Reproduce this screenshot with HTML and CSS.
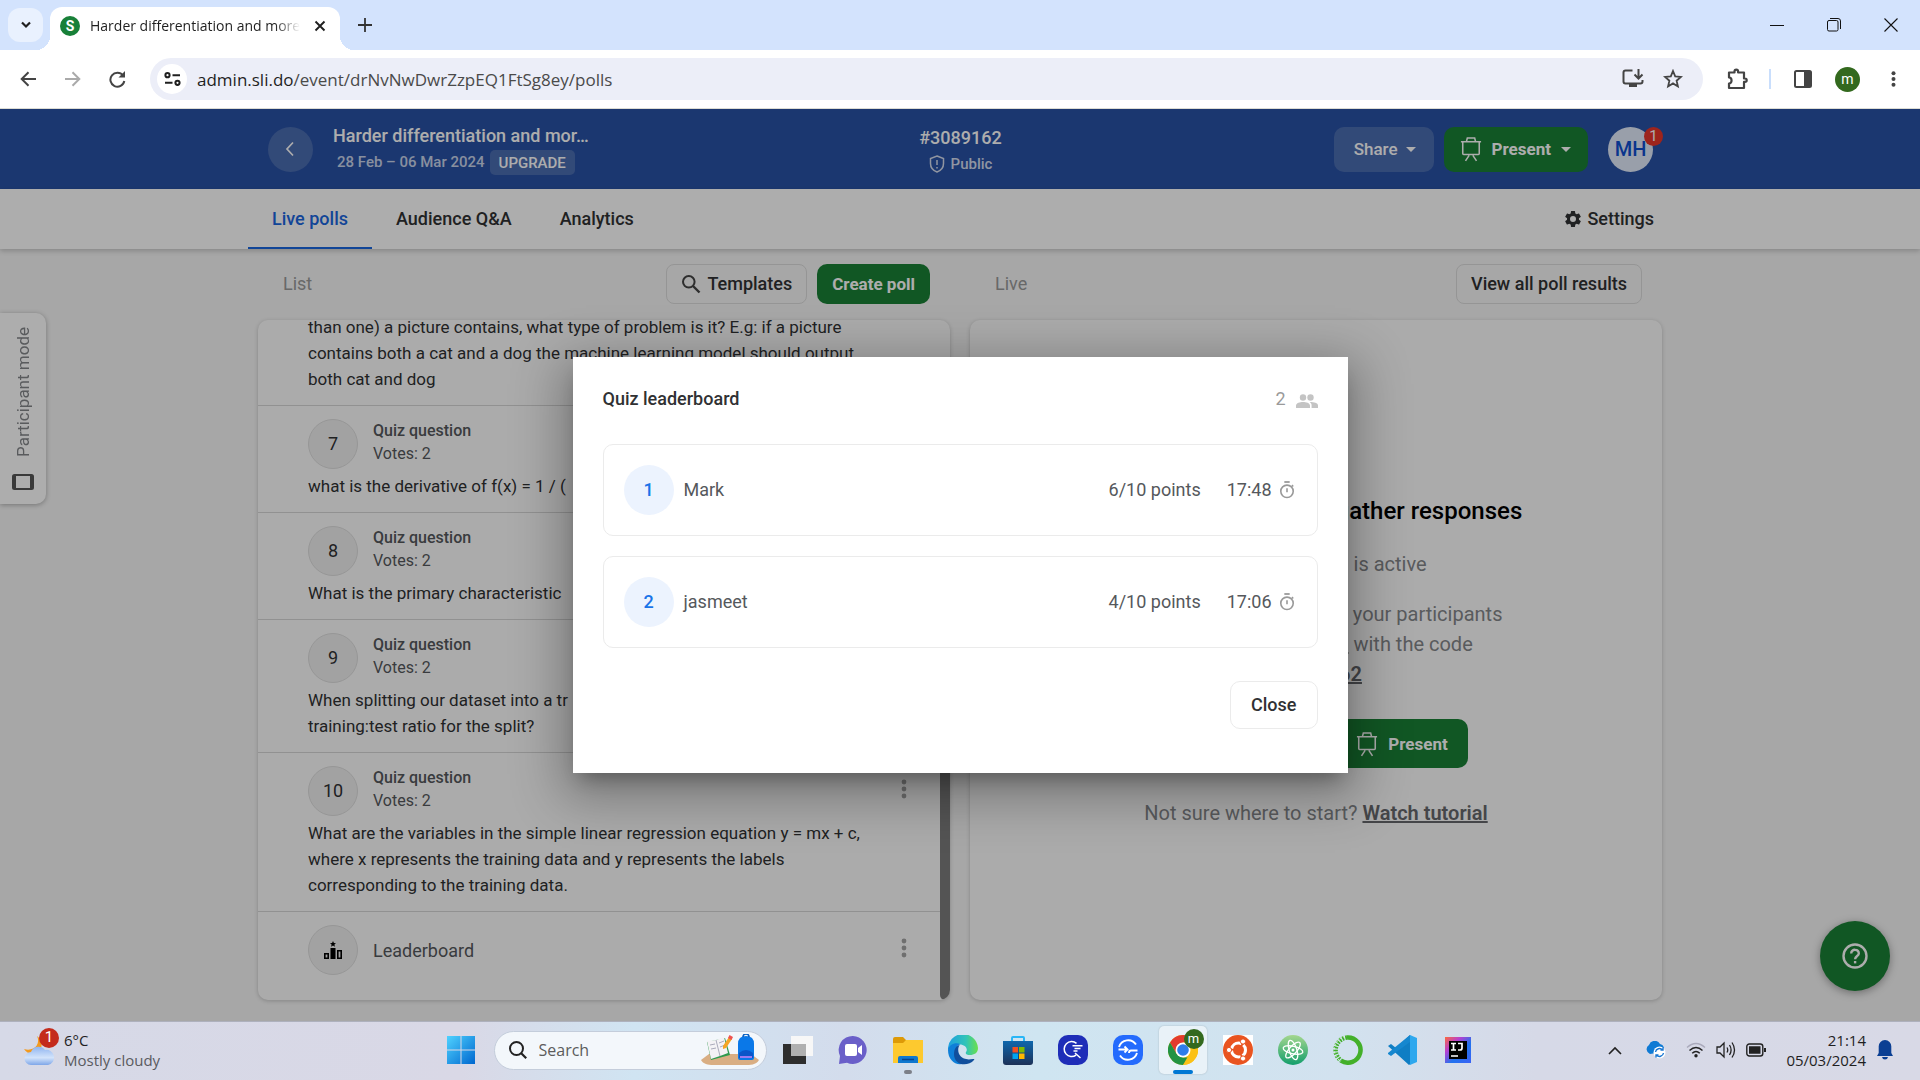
FILE: index.html
```html
<!DOCTYPE html>
<html lang="en">
<head>
<meta charset="utf-8">
<title>Harder differentiation and more</title>
<link rel="stylesheet" href="styles.css">
</head>
<body>
<svg width="0" height="0" class="defs" aria-hidden="true">
  <symbol id="i-board" viewBox="0 0 24 28"><g fill="none" stroke="currentColor" stroke-width="1.700"><path d="M1 6h22M3 6v13q0 1 1 1h16q1 0 1-1V6M7 6l1-4h8l1 4M10 21l-4 6M14 21l4 6"/></g></symbol>
  <symbol id="i-dots" viewBox="0 0 6 20"><circle cx="3" cy="3" r="2.4"/><circle cx="3" cy="10" r="2.4"/><circle cx="3" cy="17" r="2.4"/></symbol>
  <symbol id="i-watch" viewBox="0 0 18 20"><path d="M6 1h6" stroke="currentColor" stroke-width="2"/><circle cx="9" cy="11.500" r="7" fill="none" stroke="currentColor" stroke-width="1.800"/><path d="M9 8v4.500M14.500 4.500l1.500 1.500" stroke="currentColor" stroke-width="1.800"/></symbol>
</svg>

<header class="tabstrip">
  <button class="tab-search" aria-label="Search tabs"><svg width="12" height="8" viewBox="0 0 12 8"><path d="M2 1.500l4 4 4-4" fill="none" stroke="#1f1f1f" stroke-width="2.200"/></svg></button>
  <div class="tab">
    <span class="favicon">S</span>
    <span class="tab-title">Harder differentiation and more</span>
    <button class="icon-btn tab-close" aria-label="Close tab"><svg width="12" height="12" viewBox="0 0 12 12"><path d="M1.500 1.500l9 9M10.500 1.500l-9 9" stroke="#1f1f1f" stroke-width="1.900"/></svg></button>
  </div>
  <button class="icon-btn new-tab" aria-label="New tab"><svg width="14" height="14" viewBox="0 0 14 14"><path d="M7 0v14M0 7h14" stroke="#333" stroke-width="1.800"/></svg></button>
  <div class="win-controls">
    <button class="icon-btn" aria-label="Minimise"><svg width="14" height="14" viewBox="0 0 14 14"><path d="M0 7.500h14" stroke="#111" stroke-width="1"/></svg></button>
    <button class="icon-btn" aria-label="Restore"><svg width="14" height="14" viewBox="0 0 14 14"><g fill="none" stroke="#111"><rect x=".5" y="2.500" width="10.500" height="10.500" rx="1.500"/><path d="M3 .5h8q2.500 0 2.500 2.500v8"/></g></svg></button>
    <button class="icon-btn" aria-label="Close"><svg width="14" height="14" viewBox="0 0 14 14"><path d="M.5.5l13 13M13.500.5l-13 13" stroke="#111" stroke-width="1.100"/></svg></button>
  </div>
</header>

<nav class="toolbar">
  <button class="icon-btn nav-btn" aria-label="Back"><svg width="16" height="16" viewBox="0 0 16 16"><path d="M16 8H2M8.500 1.200L1.700 8l6.800 6.800" fill="none" stroke="#444" stroke-width="2"/></svg></button>
  <button class="icon-btn nav-btn" aria-label="Forward"><svg width="16" height="16" viewBox="0 0 16 16"><path d="M0 8h14M7.500 1.200L14.300 8l-6.800 6.800" fill="none" stroke="#aaa" stroke-width="2"/></svg></button>
  <button class="icon-btn nav-btn" aria-label="Reload"><svg width="17" height="17" viewBox="0 0 17 17"><path d="M14 4.500A7 7 0 1 0 15.300 10" fill="none" stroke="#444" stroke-width="2"/><path d="M16 0v6.500H9.500z" fill="#444"/></svg></button>
  <div class="omnibox">
    <span class="site-info"><svg width="17" height="14" viewBox="0 0 17 14"><g fill="none" stroke="#1f1f1f" stroke-width="2"><circle cx="3.500" cy="3.200" r="2.100"/><path d="M8.500 3.200H16M1 10.800h7.500"/><circle cx="13.500" cy="10.800" r="2.100"/></g></svg></span>
    <span class="url">admin.sli.do<span class="path">/event/drNvNwDwrZzpEQ1FtSg8ey/polls</span></span>
    <button class="icon-btn" aria-label="Install"><svg width="22" height="20" viewBox="0 0 22 20"><g fill="none" stroke="#444" stroke-width="2"><path d="M10.500 1.500H3.500q-2 0-2 2v9q0 2 2 2h15q2 0 2-2v-1.500M16.500 0v9M12.500 5.500l4 4 4-4"/></g><path d="M7 15h8v3H7z" fill="#444"/></svg></button>
    <button class="icon-btn" aria-label="Bookmark"><svg width="20" height="20" viewBox="0 0 20 20"><path d="M10 2l2.200 5.400 5.800.5-4.400 3.800 1.300 5.700L10 14.400l-4.900 3 1.300-5.700L2 7.900l5.800-.5z" fill="none" stroke="#444" stroke-width="1.800"/></svg></button>
  </div>
  <button class="icon-btn ext" aria-label="Extensions"><svg width="22" height="22" viewBox="0 0 22 22"><path d="M3 4.500h5.500V3.500a1.800 1.800 0 0 1 3.600 0v1H18v6h1a1.700 1.700 0 0 1 0 3.400h-1V20H3v-4.500c3.400 0 3.400-6 0-6z" fill="none" stroke="#444" stroke-width="2.200" stroke-linejoin="round"/></svg></button>
  <span class="divider"></span>
  <button class="icon-btn side" aria-label="Side panel"><svg width="18" height="18" viewBox="0 0 18 18"><rect x="1" y="1" width="16" height="16" rx="1.500" fill="none" stroke="#444" stroke-width="2"/><path d="M10 1h7v16h-7z" fill="#444"/></svg></button>
  <button class="profile" aria-label="Profile">m</button>
  <button class="icon-btn more" aria-label="Menu"><svg width="5" height="18" fill="#444"><use href="#i-dots"/></svg></button>
</nav>

<div class="app">
  <header class="event-bar">
    <div class="container event-inner">
      <div class="event-left">
        <button class="back" aria-label="Back to events"><svg width="12" height="16" viewBox="0 0 12 16"><path d="M8 1.500L2 8l6 6.500" fill="none" stroke="currentColor" stroke-width="1.700"/></svg></button>
        <div class="event-text">
          <div class="event-title">Harder differentiation and mor…</div>
          <div class="event-date"><span>28 Feb – 06 Mar 2024</span><button class="upgrade">UPGRADE</button></div>
        </div>
      </div>
      <div class="event-code">
        <div class="code">#3089162</div>
        <div class="privacy"><svg width="16" height="18" viewBox="0 0 16 18"><path d="M8 1l6.500 2.500v5c0 4-2.500 7-6.500 8.500-4-1.500-6.500-4.500-6.500-8.500v-5zM8 5v5M8 12v1.600" fill="none" stroke="currentColor" stroke-width="1.500"/></svg>Public</div>
      </div>
      <div class="event-actions">
        <button class="share">Share<span class="caret"></span></button>
        <button class="green present"><svg width="22" height="26"><use href="#i-board"/></svg>Present<span class="caret"></span></button>
        <button class="account">MH<span class="badge">1</span></button>
      </div>
    </div>
  </header>

  <nav class="sections">
    <div class="container sections-inner">
      <a class="section active" href="#polls">Live polls</a>
      <a class="section" href="#qa">Audience Q&amp;A</a>
      <a class="section" href="#analytics">Analytics</a>
      <a class="settings" href="#settings"><svg width="20" height="20" viewBox="0 0 24 24"><path fill="currentColor" d="M19.140 12.940c.04-.3.060-.61.060-.94s-.02-.64-.07-.94l2.030-1.580a.49.490 0 0 0 .12-.61l-1.920-3.320a.49.490 0 0 0-.59-.22l-2.390.96a7 7 0 0 0-1.620-.94l-.36-2.540a.48.480 0 0 0-.48-.41h-3.840a.48.480 0 0 0-.47.410l-.36 2.540c-.59.240-1.130.570-1.620.940l-2.390-.96a.48.480 0 0 0-.59.220L2.740 8.870a.48.480 0 0 0 .12.610l2.030 1.580c-.05.300-.09.630-.09.940s.02.640.070.940l-2.030 1.580a.49.490 0 0 0-.12.610l1.920 3.320c.12.220.370.290.590.220l2.390-.96c.5.380 1.030.700 1.620.940l.36 2.540c.05.240.240.410.480.410h3.840c.24 0 .44-.17.470-.41l.36-2.540c.59-.24 1.130-.56 1.620-.94l2.390.96c.22.080.470 0 .59-.22l1.920-3.320a.48.480 0 0 0-.12-.61zM12 15.600a3.600 3.600 0 1 1 0-7.200 3.600 3.600 0 0 1 0 7.200z"/></svg>Settings</a>
    </div>
  </nav>

  <main class="container columns">
    <section class="column">
      <div class="column-head">
        <h2>List</h2>
        <button class="outline templates"><svg width="20" height="20" viewBox="0 0 20 20"><path d="M12 12l6.500 6.500" stroke="#444" stroke-width="2.400"/><circle cx="7.800" cy="7.800" r="5.800" fill="none" stroke="#444" stroke-width="2"/></svg>Templates</button>
        <button class="green create">Create poll</button>
      </div>
      <div class="panel list-panel">
        <ul class="polls">
          <li class="poll">
            <p>than one) a picture contains, what type of problem is it? E.g: if a picture contains both a cat and a dog the machine learning model should output both cat and dog</p>
          </li>
          <li class="poll">
            <div class="poll-head"><span class="num">7</span><div class="meta"><b>Quiz question</b><span>Votes: 2</span></div></div>
            <p>what is the derivative of f(x) = 1 / (</p>
          </li>
          <li class="poll">
            <div class="poll-head"><span class="num">8</span><div class="meta"><b>Quiz question</b><span>Votes: 2</span></div></div>
            <p>What is the primary characteristic</p>
          </li>
          <li class="poll">
            <div class="poll-head"><span class="num">9</span><div class="meta"><b>Quiz question</b><span>Votes: 2</span></div></div>
            <p>When splitting our dataset into a tr<br>training:test ratio for the split?</p>
          </li>
          <li class="poll">
            <div class="poll-head"><span class="num">10</span><div class="meta"><b>Quiz question</b><span>Votes: 2</span></div><button class="icon-btn dots" aria-label="More"><svg width="6" height="20"><use href="#i-dots"/></svg></button></div>
            <p>What are the variables in the simple linear regression equation y = mx + c, where x represents the training data and y represents the labels corresponding to the training data.</p>
          </li>
          <li class="poll board">
            <div class="poll-head"><span class="num"><svg width="18" height="18" viewBox="0 0 18 18"><path d="M9 0l.9 2 2.100.2-1.600 1.400.5 2.100L9 4.600 7.100 5.700l.5-2.100L6 2.200 8.100 2z"/><path d="M6.500 7h5v11h-5z"/><g fill="none" stroke="#000" stroke-width="1.600"><path d="M13.800 9.800h3.400v7.400h-3.400zM.8 12.800h3.400v4.400H.8z"/></g></svg></span><div class="meta name">Leaderboard</div><button class="icon-btn dots" aria-label="More"><svg width="6" height="20"><use href="#i-dots"/></svg></button></div>
          </li>
        </ul>
        <div class="track"><div class="thumb"></div></div>
      </div>
    </section>

    <section class="column">
      <div class="column-head live-head">
        <h2>Live</h2>
        <button class="outline">View all poll results</button>
      </div>
      <div class="panel live-panel">
        <h3>Present this poll and gather responses</h3>
        <p class="hint">When a first poll is active</p>
        <p class="join">When you press Present, your participants<br>can join on <a href="#join">slido.com</a> with the code<br><a class="strong" href="#code">#3089162</a></p>
        <div class="live-actions"><button class="outline tall">Create poll</button><button class="green tall"><svg width="22" height="26"><use href="#i-board"/></svg>Present</button></div>
        <p class="tutorial">Not sure where to start? <a class="strong" href="#tutorial">Watch tutorial</a></p>
      </div>
    </section>
  </main>

  <button class="participant"><span>Participant mode</span><svg width="22" height="16" viewBox="0 0 22 16"><rect x="1" y="1" width="20" height="14" rx="1.500" fill="none" stroke="#555" stroke-width="2"/><path d="M1 1h3v14H1zM18 1h3v14h-3z" fill="#555"/></svg></button>
  <button class="help" aria-label="Help"><svg width="26" height="26" viewBox="0 0 26 26"><g fill="none" stroke="currentColor" stroke-width="2.400"><circle cx="13" cy="13" r="11.500"/><path d="M9.200 10.500c0-5 7.600-4.800 7.600 0 0 2.500-3.700 2.700-3.700 5.800"/></g><path d="M11.900 18h2.400v2.400h-2.400z" fill="currentColor"/></svg></button>

  <div class="overlay">
    <section class="dialog" role="dialog" aria-labelledby="dlg-title">
      <header class="dialog-head">
        <h1 id="dlg-title">Quiz leaderboard</h1>
        <span class="count">2<svg width="22" height="14" viewBox="0 0 22 14"><g fill="#c4c4c4"><circle cx="7" cy="3.500" r="3.200"/><circle cx="14.500" cy="3.500" r="3.200"/><path d="M0 14v-2.500C0 9 4 8 7 8s7 1 7 3.500V14zM15.600 14v-2.500c0-1.500-.7-2.600-1.900-3.400C17.500 8 22 9 22 11.500V14z"/></g></svg></span>
      </header>
      <ol class="ranks">
        <li class="rank"><span class="pos">1</span><span class="who">Mark</span><span>6/10 points</span><span class="time">17:48<svg width="16" height="18"><use href="#i-watch"/></svg></span></li>
        <li class="rank"><span class="pos">2</span><span class="who">jasmeet</span><span>4/10 points</span><span class="time">17:06<svg width="16" height="18"><use href="#i-watch"/></svg></span></li>
      </ol>
      <div class="dialog-foot"><button class="close">Close</button></div>
    </section>
  </div>
</div>

<footer class="taskbar">
  <div class="weather">
    <div class="weather-icon">
      <svg width="32" height="32" viewBox="0 0 32 32"><defs><linearGradient id="cl" x1="0" y1="0" x2="0" y2="1"><stop offset="0" stop-color="#8fb4f0"/><stop offset=".6" stop-color="#d3e4fb"/><stop offset="1" stop-color="#7ea6e8"/></linearGradient></defs><path d="M13 2c4 8-3 16-13 13 3 5 9 6 14 3s5-12-1-16z" fill="#f39a1e"/><path d="M7 31a6.500 6.500 0 0 1 0-13 8 8 0 0 1 14-2 7.500 7.500 0 0 1 3 15z" fill="url(#cl)"/></svg>
      <span class="badge w-badge">1</span>
    </div>
    <div class="two"><span>6°C</span><span class="muted">Mostly cloudy</span></div>
  </div>
  <div class="dock">
    <button class="app-btn start" aria-label="Start"><svg width="30" height="30" viewBox="0 0 30 30"><defs><linearGradient id="wn" x1="0" y1="0" x2="1" y2="1"><stop offset="0" stop-color="#4fd2ff"/><stop offset="1" stop-color="#0067cf"/></linearGradient></defs><path fill="url(#wn)" d="M1 1h13.500v13.500H1zM15.500 1H29v13.500H15.500zM1 15.500h13.500V29H1zM15.500 15.500H29V29H15.500z"/></svg></button>
    <label class="search"><svg width="18" height="18" viewBox="0 0 18 18"><circle cx="7.500" cy="7.500" r="6.500" fill="none" stroke="#222" stroke-width="2"/><path d="M12.200 12.200l5 5" stroke="#222" stroke-width="2.200"/></svg><input type="text" placeholder="Search" aria-label="Search">
      <svg width="58" height="32" viewBox="0 0 58 32"><path d="M0 26l8-6h42l8 6c-3 5-9 5-14 5H12C7 31 2 30 0 26z" fill="#d9ae83"/><path d="M6 8l18-4 5 17-19 5z" fill="#2f9a4e"/><path d="M6 7l9-1 4 16-9 3zM15 6l8-3 4 16-8 3z" fill="#f4f2f5"/><path d="M15 6l4 16M9 11l5-1M10 15l5-1M18 9l5-2M19 13l5-2" stroke="#aab" stroke-width="1"/><path d="M22 12l6-9 3 2-6 9-3 1z" fill="#f5a524"/><path d="M27 4l1.500-3 3.500 2-1.500 3z" fill="#ef5350"/><path d="M37 10q0-8 8-8t8 8v14q0 2-2 2H39q-2 0-2-2z" fill="#0a78e8"/><path d="M42 3q0-3 3-3t3 3" fill="none" stroke="#0a5fc0" stroke-width="1.500"/><path d="M38 19q7-6 14 0v5H38z" fill="#0b55c9"/><path d="M39 22h12v2H39z" fill="#9a7bf0"/></svg></label>
    <div class="apps">
      <button class="app-btn" aria-label="Task view"><svg width="30" height="28" viewBox="0 0 30 28"><path d="M0 8h23v20H0z" fill="#2e2e2e"/><path d="M8 0h22v20H8z" fill="#f7f7f7"/><path d="M8 8h15v12H8z" fill="#b0b0b0"/></svg></button>
      <button class="app-btn" aria-label="Chat"><svg width="30" height="30" viewBox="0 0 30 30"><path d="M15 1a14 14 0 1 1-6 26.800L1 29l1-8A14 14 0 0 1 15 1z" fill="#6a5fc9"/><rect x="7" y="9" width="12" height="12" rx="2" fill="#fff"/><path d="M20 13l4-3v10l-4-3z" fill="#fff"/></svg></button>
      <button class="app-btn running" aria-label="Files"><svg width="30" height="28" viewBox="0 0 30 28"><path d="M0 3q0-2 2-2h8l3 3h16v8H0z" fill="#dd9a08"/><path d="M0 7h10l3-3h17v23H0z" fill="#fdc92f"/><path d="M5 27v-5q0-2 2-2h16q2 0 2 2v5z" fill="#0f78cf"/><path d="M9 23.500h12" stroke="#06438d" stroke-width="1.500"/></svg></button>
      <button class="app-btn" aria-label="Edge"><svg width="30" height="30" viewBox="0 0 30 30"><defs><linearGradient id="eg" x1="0" x2="1"><stop offset="0" stop-color="#1d9fe0"/><stop offset=".6" stop-color="#31c4b8"/><stop offset="1" stop-color="#6be04a"/></linearGradient></defs><path d="M0 15A15 15 0 0 1 30 13c0 5-4 7-8 7-3 0-5-1-4-3 3-4-3-9-9-7-5 1-8 4-9 5z" fill="url(#eg)"/><path d="M0 15c1-5 7-8 12-6-6 3-7 14 5 19-8 4-17-2-17-13z" fill="#0f7fd8"/><path d="M12 9.500C8 14 10 27 25 24c1 0 2 0 1 1-6 7-20 6-20-6 0-5 2-8 6-9.500z" fill="#114f9c"/></svg></button>
      <button class="app-btn" aria-label="Store"><svg width="30" height="30" viewBox="0 0 30 30"><defs><linearGradient id="st" x1="0" y1="0" x2="0" y2="1"><stop offset="0" stop-color="#0e67ad"/><stop offset="1" stop-color="#1d3258"/></linearGradient></defs><path d="M9 6V3q0-1 1-1h10q1 0 1 1v3" fill="none" stroke="#29b6f6" stroke-width="2"/><path d="M0 6h30v21q0 3-3 3H3q-3 0-3-3z" fill="url(#st)"/><path d="M9.500 12H15v5.500H9.500z" fill="#f25022"/><path d="M16 12h5.500v5.500H16z" fill="#7fba00"/><path d="M9.500 18.500H15V24H9.500z" fill="#00a4ef"/><path d="M16 18.500h5.500V24H16z" fill="#ffb900"/></svg></button>
      <button class="app-btn" aria-label="Quick search"><svg width="30" height="30" viewBox="0 0 30 30"><rect width="30" height="30" rx="10" fill="#1e2db8"/><path d="M18.500 8.300A7.500 7.500 0 1 0 18 20.200M17 18l5.500 5M14.500 10.800h10M16.500 13.500h6M15.500 16h4" fill="none" stroke="#fff" stroke-width="1.500"/></svg></button>
      <button class="app-btn" aria-label="Switch"><svg width="30" height="30" viewBox="0 0 30 30"><rect width="30" height="30" rx="10" fill="#246bfd"/><path d="M6 12a9.500 9.500 0 0 1 17-2.500M24 18a9.500 9.500 0 0 1-17 2.500M5.500 14.500H14M11.500 11.500l3 3-3 3M24.500 15.500H18q-2 0-2 2.500" fill="none" stroke="#fff" stroke-width="1.900"/></svg></button>
      <button class="app-btn current" aria-label="Chrome"><svg width="30" height="30" viewBox="0 0 30 30"><circle cx="15" cy="15" r="15" fill="#fbc116"/><path d="M15 0A15 15 0 0 1 28 7.500H15L8.500 18.700 2 7.500A15 15 0 0 1 15 0z" fill="#e33b2e"/><path d="M2 7.500l6.500 11.200L15 22.500h6.500L15 30A15 15 0 0 1 2 7.500z" fill="#229342"/><path d="M21.500 18.700L15 30a15 15 0 0 0 13-22.500H15z" fill="#fbc116"/><circle cx="15" cy="15" r="7.500" fill="#fff"/><circle cx="15" cy="15" r="5.800" fill="#2f7de9"/></svg><span class="m-badge">m</span></button>
      <button class="app-btn" aria-label="Ubuntu"><svg width="30" height="30" viewBox="0 0 30 30"><path d="M0 0h30v30H0z" fill="#fff"/><circle cx="15" cy="15" r="15" fill="#e95420"/><circle cx="15.500" cy="15" r="7" fill="none" stroke="#fff" stroke-width="3" stroke-dasharray="12.660 2" stroke-dashoffset="6"/><g fill="#fff" stroke="#e95420" stroke-width="1"><circle cx="6" cy="15" r="2.600"/><circle cx="20" cy="6.500" r="2.600"/><circle cx="20" cy="23.500" r="2.600"/></g></svg></button>
      <button class="app-btn" aria-label="Atom"><svg width="30" height="30" viewBox="0 0 30 30"><defs><linearGradient id="at" x1="0" y1="0" x2="0" y2="1"><stop offset="0" stop-color="#a4d78f"/><stop offset="1" stop-color="#129e6b"/></linearGradient></defs><circle cx="15" cy="15" r="15" fill="url(#at)"/><g fill="none" stroke="#fff" stroke-width="1.300"><ellipse cx="15" cy="15" rx="10" ry="3.800" transform="rotate(12 15 15)"/><ellipse cx="15" cy="15" rx="10" ry="3.800" transform="rotate(72 15 15)"/><ellipse cx="15" cy="15" rx="10" ry="3.800" transform="rotate(132 15 15)"/></g><circle cx="15" cy="15" r="1.500" fill="#fff"/></svg></button>
      <button class="app-btn" aria-label="Anaconda"><svg width="30" height="30" viewBox="0 0 30 30"><path d="M14 2.500a12.600 12.600 0 1 1-6 23.100" fill="none" stroke="#43b02a" stroke-width="4.500"/><path d="M14 2.500A12.700 12.700 0 0 0 8 25.500" fill="none" stroke="#43b02a" stroke-width="4.500" stroke-dasharray="1.800 1.200"/><path d="M12 1.500A13.500 13.500 0 0 0 6 25" fill="none" stroke="#e4f2e8" stroke-width="1" stroke-dasharray="2 2"/></svg></button>
      <button class="app-btn" aria-label="Visual Studio Code"><svg width="30" height="30" viewBox="0 0 30 30"><path d="M22 0L8 13 3 9 0 11l21 19 4-3V8z" fill="#0f7ec4"/><path d="M0 19l3 2L22 7V0L0 18z" fill="#1587cf"/><path d="M22 0l7 3v24l-7 3z" fill="#2ea8ee"/></svg></button>
      <button class="app-btn" aria-label="IntelliJ IDEA"><svg width="28" height="28" viewBox="0 0 28 28"><defs><linearGradient id="ij" x1="0" y1="0" x2="1" y2="1"><stop offset="0" stop-color="#fc6a3a"/><stop offset=".3" stop-color="#b83fd0"/><stop offset=".6" stop-color="#2173ee"/><stop offset="1" stop-color="#3b62f5"/></linearGradient></defs><path d="M1 1h26v26H1z" fill="url(#ij)"/><path d="M5 5h18v18H5z"/><path d="M7 7.500h5M9.500 7.500V14M7 14h5M14 7.500h4V12q0 2-2 2h-2M7 20h7" fill="none" stroke="#fff" stroke-width="1.700"/></svg></button>
    </div>
  </div>
  <div class="tray">
    <svg width="14" height="9" viewBox="0 0 14 9"><path d="M1 8l6-6 6 6" fill="none" stroke="#222" stroke-width="1.600"/></svg>
    <svg class="cloud" width="21" height="18" viewBox="0 0 21 18"><path d="M5 13a5 5 0 0 1-1-9A6 6 0 0 1 15 3a5 5 0 0 1 3 8z" fill="#0f7ad4"/><circle cx="14.500" cy="11.500" r="6" fill="#fff"/><path d="M10.500 11a4 4 0 0 1 7-2M18.500 12a4 4 0 0 1-7 2M18 6.500V9h-2.500M11 16.500V14h2.500" fill="none" stroke="#1976d2" stroke-width="1.400"/></svg>
    <div class="status">
      <svg width="20" height="16" viewBox="0 0 20 16"><path d="M1 5.500q9-8 18 0" fill="none" stroke="#aab" stroke-width="1.300"/><path d="M3.500 8.500q6.500-6 13 0M6.200 11.300q3.800-3.500 7.600 0" fill="none" stroke="#222" stroke-width="1.500"/><circle cx="10" cy="13.800" r="1.700" fill="#222"/></svg>
      <svg width="20" height="18" viewBox="0 0 20 18"><path d="M1 6h3l4-4v14l-4-4H1zM11 6.500q1.500 2.500 0 5M13.500 4q3.200 5 0 10M16 1.500q5 7.500 0 15" fill="none" stroke="#222" stroke-width="1.300"/></svg>
      <svg width="20" height="14" viewBox="0 0 20 14"><rect x=".8" y="1" width="16" height="12" rx="2.500" fill="none" stroke="#222" stroke-width="1.400"/><path d="M3 3.300h11.500v7.400H3zM18 5h2v4h-2z" fill="#222"/></svg>
    </div>
    <div class="two clock"><span>21:14</span><span>05/03/2024</span></div>
    <svg class="bell" width="16" height="20" viewBox="0 0 16 20"><path d="M8 0a6.300 6.300 0 0 1 6.300 6.500V13L16 16H0l1.700-3V6.500A6.300 6.300 0 0 1 8 0zM5 17h6q-.5 2.500-3 2.500T5 17z" fill="#0b3f93"/></svg>
  </div>
</footer>
</body>
</html>
```
FILE: styles.css
```css
* { box-sizing: border-box; }
html, body { height: 100%; }
body {
  margin: 0;
  display: flex;
  flex-direction: column;
  overflow: hidden;
  font-family: "Open Sans", "Noto Sans", sans-serif;
  color: #1f1f1f;
}
button { font: inherit; color: inherit; border: 0; padding: 0; background: none; }
h1, h2, h3, p, ul, ol { margin: 0; padding: 0; font-size: inherit; font-weight: inherit; list-style: none; }
a { color: inherit; text-decoration: none; }
svg { display: block; flex: none; }
.defs { position: absolute; }
.icon-btn { display: grid; place-items: center; }

/* Browser chrome */
.tabstrip { display: flex; flex: none; height: 50px; padding: 0 1px 0 8px; background: #d3e3fd; }
.tab-search { display: grid; place-items: center; width: 35px; height: 34px; margin: 8px 7px 0 0; border-radius: 12px; background: #e9f1fe; }
.tab { position: relative; display: flex; align-items: center; width: 290px; height: 43px; margin-top: 7px; padding: 0 12px 6px 10px; border-radius: 12px 12px 0 0; background: #fff; }
.tab::before, .tab::after { content: ""; position: absolute; bottom: 0; width: 14px; height: 14px; }
.tab::before { left: -14px; background: radial-gradient(circle at 0 0, transparent 14px, #fff 14px); }
.tab::after { right: -14px; background: radial-gradient(circle at 100% 0, transparent 14px, #fff 14px); }
.favicon { flex: none; width: 20px; height: 20px; border-radius: 50%; background: #188038; color: #fff; font: 700 14px/20px Roboto, sans-serif; text-align: center; }
.tab-title { flex: 1; margin-left: 10px; overflow: hidden; white-space: nowrap; font-size: 14px; -webkit-mask-image: linear-gradient(90deg, #000 88%, transparent); mask-image: linear-gradient(90deg, #000 88%, transparent); }
.tab-close { width: 16px; height: 16px; margin-left: 12px; }
.new-tab { width: 34px; height: 34px; margin: 8px 0 0 8px; }
.win-controls { display: flex; margin-left: auto; }
.win-controls .icon-btn { width: 57px; height: 50px; }

.toolbar { display: flex; flex: none; align-items: center; height: 59px; padding: 0 12px 0 5px; border-bottom: 1px solid #dcdcd4; background: #fff; }
.nav-btn { width: 45px; height: 40px; }
.omnibox { display: flex; flex: 1; align-items: center; height: 42px; margin-left: 10px; padding: 0 20px 0 7px; border-radius: 21px; background: #eceef8; }
.site-info { display: grid; place-items: center; width: 30px; height: 30px; border-radius: 50%; background: #fff; }
.url { flex: 1; margin-left: 10px; font-size: 17px; }
.path { color: #4a4a4a; }
.omnibox .icon-btn { width: 40px; }
.omnibox .icon-btn:last-child { width: 20px; margin-left: 10px; }
.ext { width: 40px; margin-left: 14px; }
.divider { width: 2px; height: 20px; margin: 0 12px; background: #c9defc; }
.side { width: 40px; }
.profile { width: 25px; height: 25px; margin: 0 18px 0 12px; border-radius: 50%; background: #33691e; color: #fff; font: 14px/24px Roboto, sans-serif; }
.more { width: 30px; }

/* Application */
.app { position: relative; display: flex; flex: 1; flex-direction: column; min-height: 0; background: #f6f6f6; font: 17px/26px Roboto, sans-serif; color: #303133; }
.container { width: 100%; max-width: 1424px; margin: 0 auto; }
.event-bar { flex: none; height: 80px; background: #2952a5; color: #fff; }
.event-inner { display: grid; grid-template-columns: 1fr auto 1fr; align-items: center; height: 100%; padding: 0 19px 0 20px; }
.event-left { display: flex; align-items: center; gap: 20px; }
.back { display: grid; place-items: center; width: 45px; height: 45px; border-radius: 50%; background: #4b6db2; }
.event-title { font-weight: 500; font-size: 18px; line-height: 26px; }
.event-date { display: flex; align-items: center; gap: 5px; padding-left: 4px; font-weight: 500; font-size: 15px; color: #c9d4ea; }
.upgrade { height: 25px; padding: 0 9px; border-radius: 5px; background: #4b6db2; color: #fff; }
.event-code { padding-top: 3px; text-align: center; }
.code { font-weight: 500; font-size: 18px; }
.privacy { display: flex; justify-content: center; align-items: center; gap: 6px; font-weight: 500; font-size: 15px; color: #d4dcee; }
.event-actions { display: flex; justify-content: flex-end; align-items: center; }
.caret { display: inline-block; border: 5px solid transparent; border-top-color: currentColor; border-bottom: 0; margin-left: 8px; }
.share, .green { border-radius: 10px; font-weight: 500; color: #fff; }
.share { display: flex; align-items: center; height: 45px; padding: 0 18px 0 20px; background: #4b6db2; }
.green { display: flex; justify-content: center; align-items: center; gap: 10px; background: #1a8035; font-weight: 700; }
.present { height: 45px; margin: 0 20px 0 10px; padding: 0 17px 0 16px; }
.present .caret { margin-left: 0; }
.account { position: relative; width: 45px; height: 45px; border-radius: 50%; background: #e2ebfb; color: #0f4fd0; font-weight: 500; font-size: 20px; }
.badge { position: absolute; top: 0; right: -10px; width: 19px; height: 19px; border-radius: 50%; background: #e8352a; color: #fff; font: 15px/19px Roboto, sans-serif; text-align: center; }

.sections { flex: none; height: 60px; background: #fff; box-shadow: 0 2px 5px rgba(0, 0, 0, .2); z-index: 1; }
.sections-inner { display: flex; height: 100%; font-weight: 500; font-size: 18px; }
.section { display: flex; align-items: center; padding: 0 24px; }
.section.active { color: #1a66df; border-bottom: 2px solid #1a66df; padding-top: 2px; }
.settings { display: flex; align-items: center; gap: 4px; margin-left: auto; padding-right: 18px; }

.columns { display: grid; grid-template-columns: 1fr 1fr; gap: 20px; flex: 1; min-height: 0; padding: 0 10px 21px; }
.column { display: flex; flex-direction: column; min-height: 0; min-width: 0; }
.column-head { display: flex; align-items: center; flex: none; height: 71px; padding: 0 20px 2px 25px; }
.column-head h2 { flex: 1; color: #9a9a9a; font-size: 18px; }
.column-head button { height: 40px; }
.outline { display: flex; justify-content: center; align-items: center; gap: 6px; padding: 0 14px; border: 1px solid #dcdcdc; border-radius: 8px; font-weight: 500; font-size: 18px; }
.create { margin-left: 10px; padding: 0 15px; }
.panel { flex: 1; min-height: 0; border-radius: 10px; background: #fdfdfd; box-shadow: 0 1px 4px rgba(0, 0, 0, .2); overflow: hidden; }
.list-panel { display: flex; }
.polls { display: flex; flex: 1; flex-direction: column; justify-content: flex-end; }
.poll { flex: none; padding: 13px 50px 13px 50px; border-bottom: 1px solid #d6d6d6; }
.poll-head { display: flex; align-items: center; margin-bottom: 4px; }
.poll-head .dots { width: 26px; height: 30px; margin-right: -27px; padding-bottom: 5px; }
.dots svg { fill: #a4a4a4; }
.num { display: grid; place-items: center; width: 50px; height: 50px; border: 1px solid #dedede; border-radius: 50%; background: #efefef; font-size: 18px; }
.meta { display: flex; flex: 1; flex-direction: column; margin-left: 15px; padding-bottom: 4px; font-size: 16px; line-height: 23px; color: #55585c; }
.meta b { font-weight: 500; }
.meta.name { padding-bottom: 0; font-size: 18px; }
.board { height: 88px; border-bottom: 0; }
.track { display: flex; flex-direction: column; justify-content: flex-end; width: 10px; }
.thumb { height: 65%; border-radius: 5px; background: #7d7d7d; }

.live-panel { display: flex; flex-direction: column; justify-content: center; align-items: center; padding-top: 4px; text-align: center; font-size: 20px; line-height: 30px; color: #84868a; }
.live-panel h3 { font-weight: 500; font-size: 24px; color: #000; white-space: nowrap; }
.hint { margin-top: 23px; }
.join { margin-top: 20px; }
.live-panel a { text-decoration: underline; color: #66686c; }
.strong { font-weight: 600; }
.live-actions { display: flex; gap: 12px; margin: 30px 0; }
.live-actions button { font-size: 17px; }
.tall { height: 49px; padding: 0 20px; }
.live-actions .outline { width: 160px; }

.participant { position: absolute; left: 0; top: 204px; display: flex; flex-direction: column; align-items: center; justify-content: space-between; width: 46px; height: 191px; padding: 14px 0; border-radius: 0 10px 10px 0; background: #fff; box-shadow: 0 1px 5px rgba(0, 0, 0, .3); color: #84868a; font-size: 17px; }
.participant span { writing-mode: vertical-rl; transform: rotate(180deg); }
.help { position: absolute; right: 30px; bottom: 30px; display: grid; place-items: center; width: 70px; height: 70px; border-radius: 50%; background: #1a8035; color: #fff; box-shadow: 0 2px 8px rgba(0, 0, 0, .35); }

.overlay { position: absolute; inset: 0; z-index: 2; display: grid; place-items: center; background: rgba(0, 0, 0, .32); }
.dialog { width: 775px; padding: 29px 30px 44px; background: #fff; box-shadow: 0 14px 48px 11px rgba(0, 0, 0, .3), 0 12px 18px -8px rgba(0, 0, 0, .3); color: #55585c; font-size: 18px; }
.dialog-head { display: flex; justify-content: space-between; align-items: center; margin-bottom: 32px; }
.dialog-head h1 { font-weight: 500; color: #303133; }
.count { display: flex; align-items: center; gap: 10px; color: #9a9a9a; }
.count svg { margin-top: 4px; }
.ranks { display: flex; flex-direction: column; gap: 20px; }
.rank { display: flex; align-items: center; height: 92px; padding: 0 22px 0 20px; border: 1px solid #ebebeb; border-radius: 10px; }
.pos { display: grid; place-items: center; width: 50px; height: 50px; margin-right: 10px; border-radius: 50%; background: #ecf3fe; color: #1a73e8; font-weight: 500; }
.who { flex: 1; }
.time { display: flex; align-items: center; gap: 7px; margin-left: 26px; }
.time svg { color: #999; }
.dialog-foot { display: flex; justify-content: flex-end; margin-top: 33px; }
.close { height: 48px; padding: 0 20px; border: 1px solid #ebebeb; border-radius: 10px; font-weight: 500; color: #303133; }

/* Desktop taskbar */
.taskbar { display: grid; grid-template-columns: 1fr auto 1fr; align-items: center; flex: none; height: 59px; padding: 0 2px 2px 0; border-top: 1px solid #aeb1bd; background: linear-gradient(90deg, #d6d9e7, #d9d8e6 24%, #d0e4f2 33%, #d3dcec 44%, #cfe5f1 54%, #d2e2ef 70%, #d6d9e7 80%, #d8d9e6); font-size: 15px; line-height: 20px; }
.weather { display: flex; align-items: center; gap: 8px; padding-left: 24px; }
.weather-icon { position: relative; }
.w-badge { top: -6px; right: -3px; width: 20px; height: 20px; background: #c42b1c; }
.two { display: flex; flex-direction: column; }
.muted { color: #5a5b60; }
.dock, .apps { display: flex; align-items: center; }
.apps { gap: 7px; }
.app-btn { position: relative; display: grid; place-items: center; width: 48px; height: 48px; border-radius: 5px; }
.current { background: #e9f2f8; box-shadow: 0 0 2px rgba(0, 0, 0, .2); }
.current::after, .running::after { content: ""; position: absolute; bottom: 0; left: 14px; width: 20px; height: 4px; border-radius: 2px; background: #0078d4; }
.running::after { left: 20px; width: 8px; background: #7c8088; }
.m-badge { position: absolute; top: 3px; right: 3px; width: 20px; height: 20px; border-radius: 50%; background: #33691e; color: #fff; font: 13px/19px Roboto, sans-serif; }
.search { display: flex; align-items: center; width: 273px; height: 39px; margin: 0 7px 0 9px; padding: 0 7px 0 14px; border: 1px solid #c4cddb; border-radius: 20px; background: #f3f7fb; }
.search input { flex: 1; min-width: 0; margin-left: 12px; padding: 0; border: 0; outline: 0; background: none; font: 16px "Open Sans", sans-serif; }
.search input::placeholder { color: #5c5c5c; opacity: 1; }
.tray { display: flex; justify-content: flex-end; align-items: center; padding-right: 25px; }
.cloud { margin: 0 20px 0 23px; }
.status { display: flex; align-items: center; gap: 10px; margin-right: 20px; }
.clock { text-align: right; }
.bell { margin-left: 11px; }
```
